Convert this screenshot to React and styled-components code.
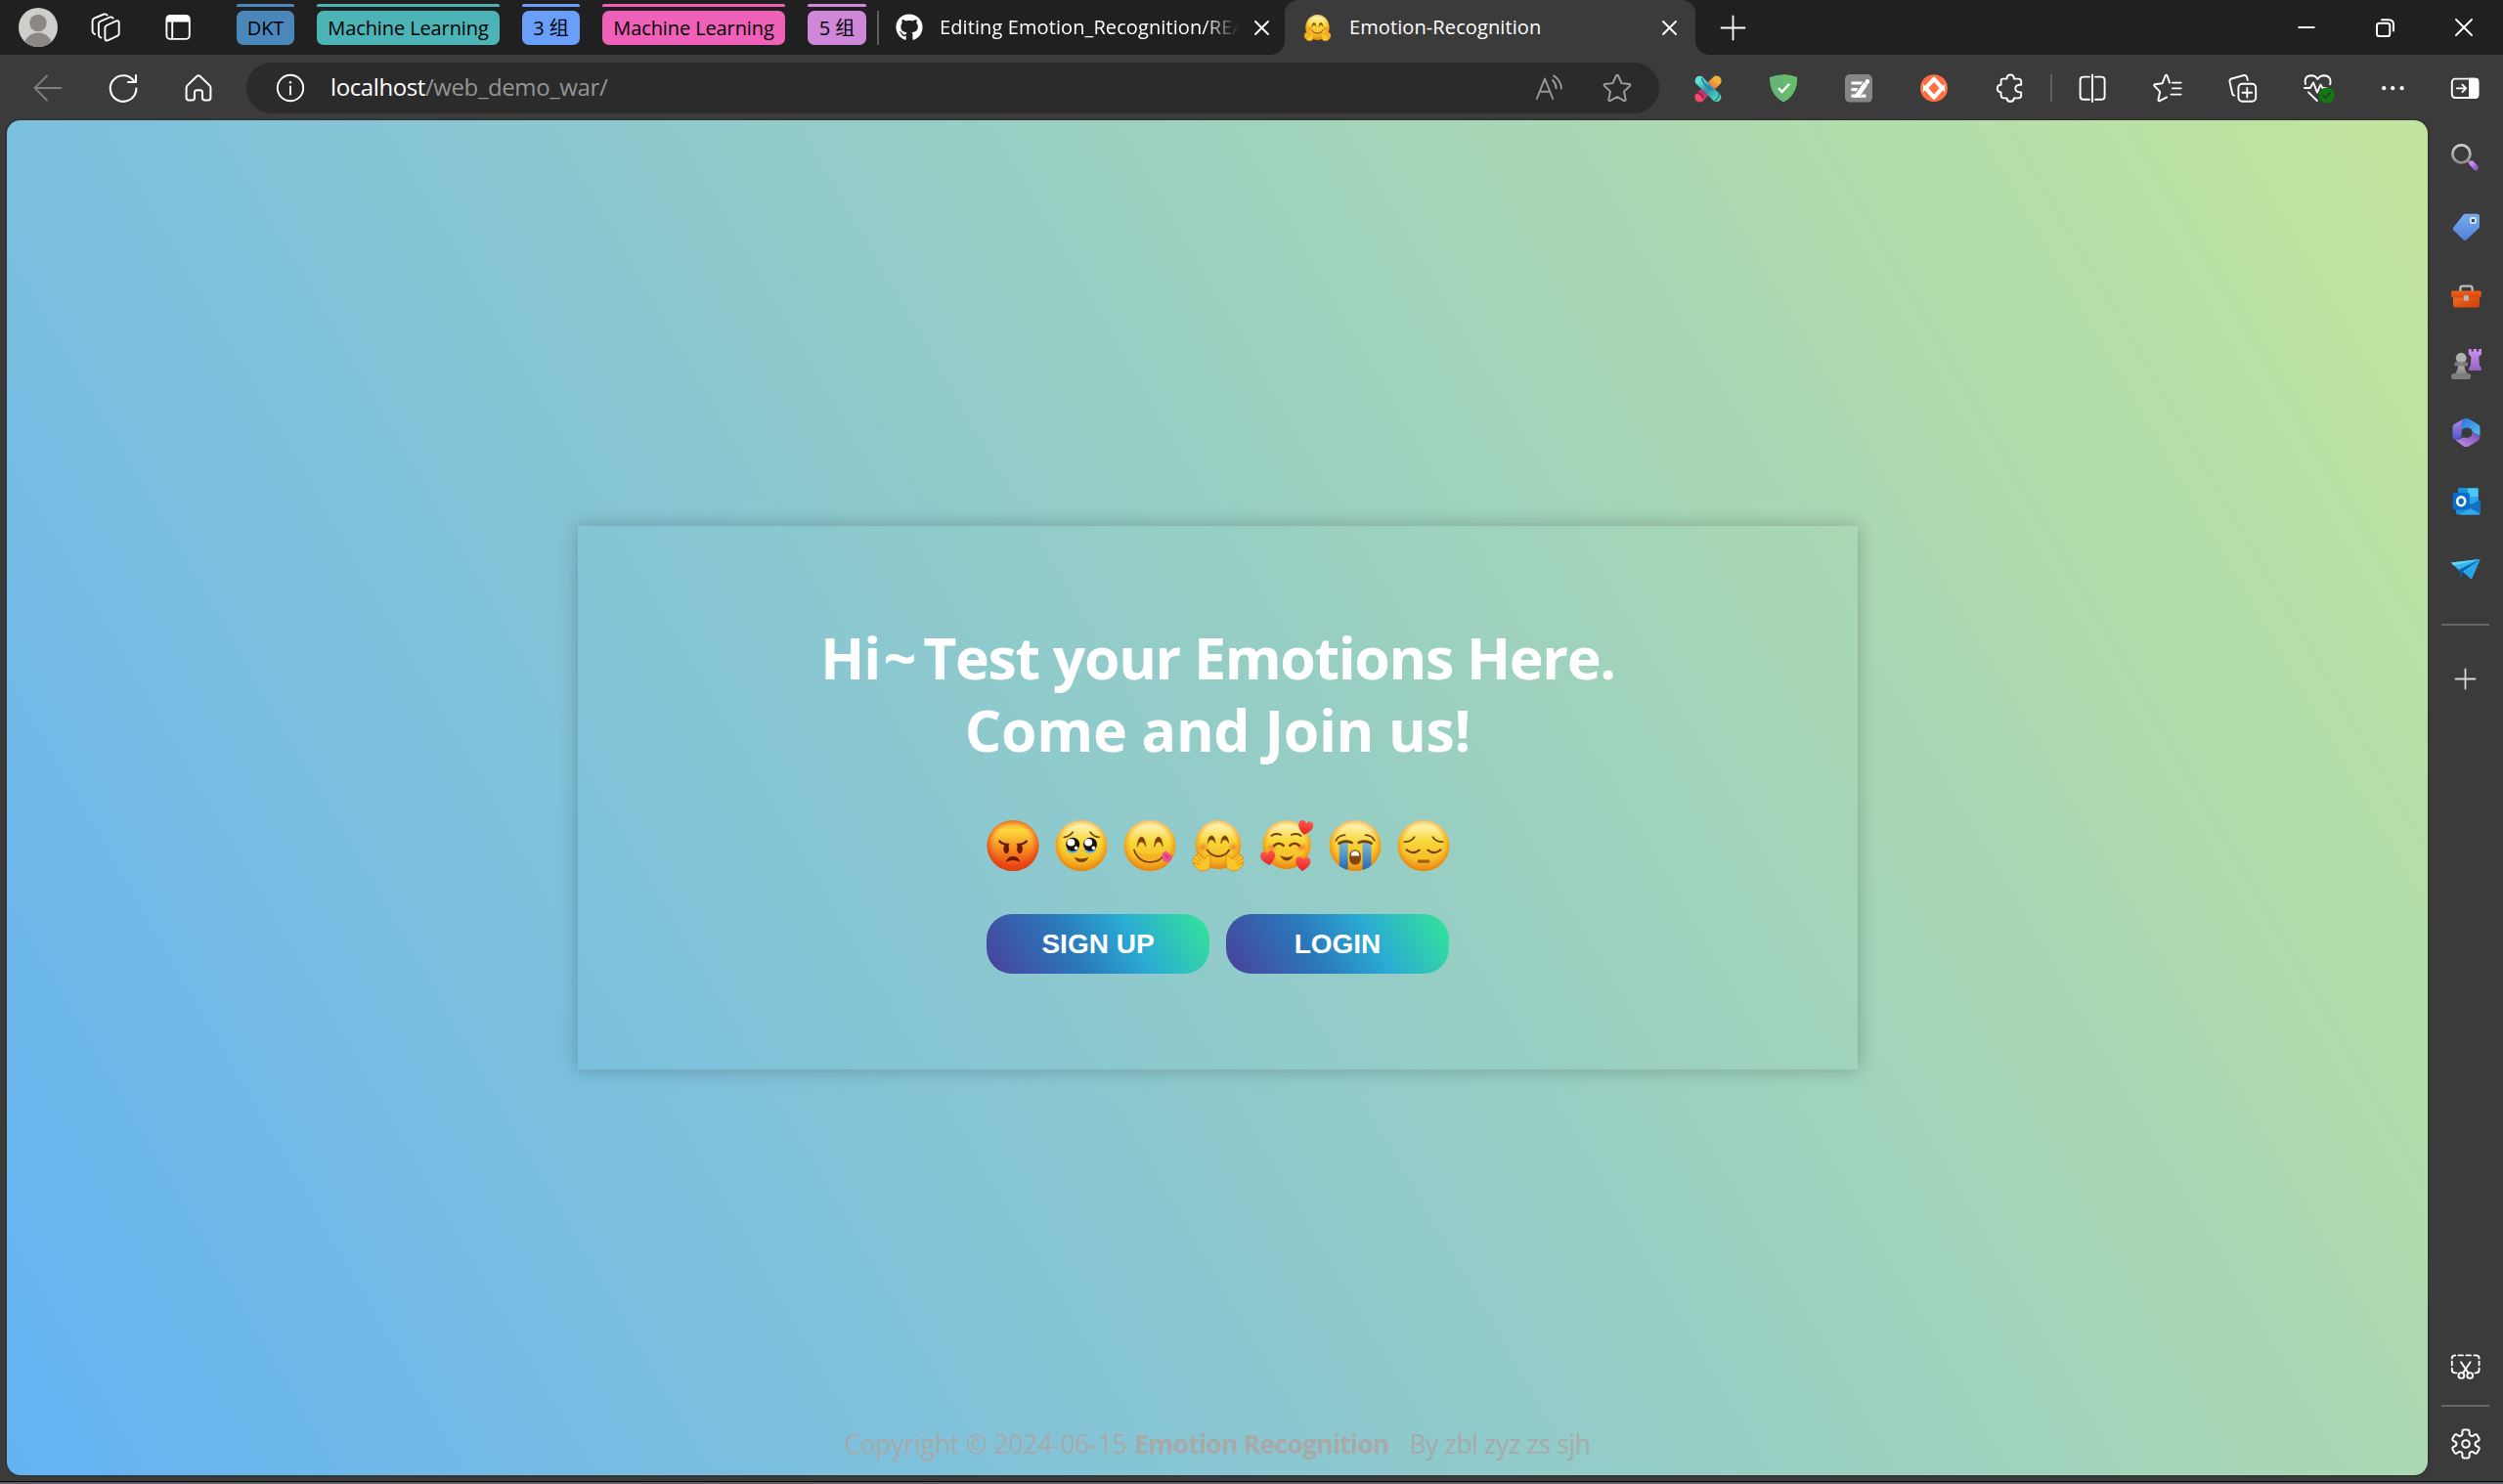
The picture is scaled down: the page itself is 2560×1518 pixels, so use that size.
import React from "react";
import styled, { createGlobalStyle, css } from "styled-components";
import { FaGithub } from "react-icons/fa";

const GlobalStyle = createGlobalStyle`
  * { box-sizing: border-box; }
  html, body { margin: 0; padding: 0; background: #3b3b3b; }
  body { font-family: "Open Sans", "Noto Sans", "Noto Sans CJK SC", sans-serif; }
  svg { display: block; flex: none; overflow: visible; }
`;

/* ---------- window frame ---------- */

const Window = styled.div`
  width: 2560px;
  height: 1518px;
  display: flex;
  flex-direction: column;
  background: #3b3b3b;
  overflow: hidden;
`;

const BottomEdge = styled.div`
  height: 3px;
  flex: none;
  background: #5c5f66;
  border-top: 1px solid #000;
`;

/* ---------- tab strip ---------- */

const TabStrip = styled.header`
  display: flex;
  height: 56px;
  flex: none;
  background: #202020;
  padding-left: 19px;
`;

const StripCell = styled.div`
  width: ${(p) => p.$w}px;
  height: 56px;
  flex: none;
  display: flex;
  align-items: center;
  justify-content: ${(p) => p.$align || "center"};
`;

const TabGroups = styled.div`
  display: flex;
  gap: 23px;
  padding-top: 4px;
`;

const GroupBlock = styled.div`
  width: ${(p) => p.$w}px;
  display: flex;
  flex-direction: column;
  gap: 4px;
  &::before {
    content: "";
    height: 3px;
    border-radius: 2px 2px 0 0;
    background: ${(p) => p.$color};
  }
`;

const GroupLabel = styled.span`
  height: 35px;
  border-radius: 7px;
  display: flex;
  align-items: center;
  justify-content: center;
  background: ${(p) => p.$color};
  color: #000;
  font-size: 20px;
  line-height: 34px;
  letter-spacing: -0.1px;
  white-space: pre;
`;

const StripDivider = styled.div`
  width: 2px;
  height: 35px;
  margin: 11px 17px 0 11px;
  background: #5d5d5d;
`;

const Tab = styled.div`
  position: relative;
  display: flex;
  align-items: center;
  height: 56px;
  width: ${(p) => p.$w}px;
  flex: none;
  color: #fff;
  ${(p) =>
    p.$active &&
    css`
      background: #3b3b3b;
      border-radius: 14px 14px 0 0;
      padding-left: 18px;
      &::before,
      &::after {
        content: "";
        position: absolute;
        bottom: 0;
        width: 14px;
        height: 14px;
      }
      &::before {
        left: -14px;
        background: radial-gradient(circle at 0 0, transparent 13.5px, #3b3b3b 14px);
      }
      &::after {
        right: -14px;
        background: radial-gradient(circle at 100% 0, transparent 13.5px, #3b3b3b 14px);
      }
    `}
`;

const TabTitle = styled.span`
  width: ${(p) => p.$w}px;
  margin-left: 17px;
  overflow: hidden;
  white-space: nowrap;
  font-size: 20px;
  line-height: 34px;
  letter-spacing: 0.1px;
  ${(p) => p.$fade && css`
    mask-image: linear-gradient(to right, #000 calc(100% - 36px), transparent);
  `}
`;

const WindowControls = styled.div`
  display: flex;
  margin-left: auto;
`;

/* ---------- toolbar ---------- */

const Toolbar = styled.div`
  display: flex;
  align-items: center;
  height: 67px;
  flex: none;
  padding-left: 10px;
  background: #3b3b3b;
`;

const ToolSlot = styled.div`
  width: ${(p) => p.$w || 77}px;
  height: 67px;
  flex: none;
  display: flex;
  align-items: center;
  justify-content: center;
`;

const AddressBar = styled.div`
  width: 1445px;
  height: 52px;
  flex: none;
  margin: 0 11px 0 11px;
  border-radius: 26px;
  background: #2b2b2b;
  display: flex;
  align-items: center;
  padding: 0 9px 0 29px;
`;

const Url = styled.div`
  flex: 1;
  margin-left: 25px;
  font-size: 24px;
  line-height: 48px;
  height: 50px;
  letter-spacing: -0.4px;
  color: #959595;
  white-space: nowrap;
`;

const UrlHost = styled.span`
  color: #fff;
`;

const ToolDivider = styled.div`
  width: 2px;
  height: 28px;
  margin: 0 2px 0 4px;
  background: #5e5e5e;
`;

/* ---------- body ---------- */

const Body = styled.div`
  display: flex;
  flex: 1;
  padding-left: 7px;
`;

const Page = styled.main`
  width: 2476px;
  height: 1386px;
  border-radius: 14px;
  background: linear-gradient(60deg, #64b3f4 0%, #c2e59c 100%);
  box-shadow: 0 0 3px rgba(0, 0, 0, 0.45);
  display: flex;
  flex-direction: column;
  align-items: center;
`;

const Card = styled.section`
  width: 1309px;
  height: 556px;
  margin-top: 415px;
  box-shadow: 0 0 18px rgba(0, 0, 0, 0.24);
  display: flex;
  flex-direction: column;
  align-items: center;
  padding: 97px 0 0 1px;
`;

const Heading = styled.h1`
  margin: 0;
  display: flex;
  flex-direction: column;
  align-items: center;
  color: #fff;
  font-size: 59px;
  font-weight: 700;
  line-height: 74px;
`;

const HeadingLine = styled.span`
  letter-spacing: ${(p) => p.$ls}px;
  white-space: nowrap;
`;

const Tilde = styled.span`
  padding: 0 8px 0 4px;
`;

const EmojiRow = styled.div`
  display: flex;
  gap: 10px;
  margin-top: 52px;
`;

const ButtonRow = styled.div`
  display: flex;
  gap: 17px;
  margin-top: 40px;
`;

const ActionButton = styled.button`
  width: 228px;
  height: 61px;
  border: 0;
  padding: 0;
  border-radius: 26px;
  background: linear-gradient(60deg, #49409a 0%, #2b78bb 38%, #2aacd3 65%, #35e695 100%);
  color: #fff;
  font: bold 28px/61px "Liberation Sans", Arial, sans-serif;
`;

const Footer = styled.footer`
  display: flex;
  margin-top: auto;
  height: 57px;
  color: #a9a9a9;
  font-size: 26.5px;
  line-height: 50px;
  white-space: nowrap;
`;

const Copyright = styled.span`
  letter-spacing: -0.2px;
  width: 297px;
`;

const ProductName = styled.b`
  letter-spacing: -0.75px;
  width: 281px;
`;

const Authors = styled.span`
  letter-spacing: -0.4px;
`;

/* ---------- sidebar ---------- */

const Sidebar = styled.aside`
  flex: 1;
  display: flex;
  flex-direction: column;
  align-items: center;
  padding-top: 4px;
  padding-bottom: 20px;
`;

const SideSlot = styled.div`
  height: ${(p) => p.$h || 70}px;
  display: flex;
  align-items: center;
  justify-content: center;
`;

const SideDivider = styled.div`
  width: 49px;
  height: 2px;
  background: #666;
  margin: ${(p) => p.$m};
`;

const Spacer = styled.div`
  flex: 1;
`;

/* ---------- icon primitives ---------- */

const Glyph = ({ size = 32, color = "#fff", sw = 1.9, children }) => (
  <svg
    width={size}
    height={size}
    viewBox={`0 0 ${size} ${size}`}
    fill="none"
    stroke={color}
    strokeWidth={sw}
    strokeLinecap="round"
    strokeLinejoin="round"
  >
    {children}
  </svg>
);

const Avatar = () => (
  <svg width="40" height="40" viewBox="0 0 40 40">
    <defs>
      <clipPath id="avatarClip"><circle cx="20" cy="20" r="20" /></clipPath>
    </defs>
    <circle cx="20" cy="20" r="20" fill="#d0cecb" />
    <g clipPath="url(#avatarClip)">
      <circle cx="20" cy="15.5" r="8.8" fill="#8b8885" />
      <ellipse cx="20" cy="38" rx="14" ry="12.5" fill="#8b8885" />
    </g>
  </svg>
);

const WorkspacesIcon = () => (
  <Glyph>
    <path d="M17 14 L27 9.4 Q29.7 8.6 29.7 11.3 V22.3 Q29.7 23.9 28.2 24.7 L18.8 29.2 Q15.6 30.4 15.4 27.4 V16.5 Q15.4 14.8 17 14Z" />
    <path d="M11.4 26.6 Q8.9 25.6 8.9 23.8 V12.4 Q8.9 10.6 10.6 9.8 L20.6 5.5 Q22.6 4.9 23.6 6.6" />
    <path d="M5 23 Q2.6 22 2.6 20.3 V9.3 Q2.6 7.4 4.3 6.6 L14.4 2.5 Q16.5 1.9 17.6 3.6" />
  </Glyph>
);

const TabActionsIcon = () => (
  <Glyph>
    <rect x="4.4" y="3.9" width="23.4" height="24" rx="3.6" />
    <path d="M4.4 10.6 V7.5 Q4.4 3.9 8 3.9 H24.2 Q27.8 3.9 27.8 7.5 V10.6Z" fill="#fff" stroke="none" />
    <path d="M10.2 10 V27.5" />
  </Glyph>
);

const CloseIcon = ({ size = 15 }) => (
  <Glyph size={size} sw={1.9}>
    <path d={`M1 1 L${size - 1} ${size - 1} M${size - 1} 1 L1 ${size - 1}`} />
  </Glyph>
);

const PlusIcon = ({ size = 24, color = "#fff" }) => (
  <Glyph size={size} color={color} sw={1.8}>
    <path d={`M${size / 2} 0.5 V${size - 0.5} M0.5 ${size / 2} H${size - 0.5}`} />
  </Glyph>
);

const MinimizeIcon = () => (
  <Glyph size={18}><path d="M0.5 9 H17.5" strokeLinecap="butt" /></Glyph>
);

const RestoreIcon = () => (
  <Glyph size={19} sw={2}>
    <rect x="1" y="4.8" width="13.3" height="13.2" rx="2.6" />
    <path d="M6 1.2 H13 Q18 1.2 18 6.2 V12.6" />
  </Glyph>
);

const BackIcon = () => (
  <Glyph size={30} color="#7f7f7f">
    <path d="M1.5 15 H28.5 M14 2.5 L1.5 15 L14 27.5" />
  </Glyph>
);

const ReloadIcon = () => (
  <Glyph sw={2.1}>
    <path d="M29.4 16.5 A13.3 13.3 0 1 1 26.8 8.6" />
    <path d="M29 3 V10 H21" />
  </Glyph>
);

const HomeIcon = () => (
  <Glyph sw={2}>
    <path d="M4.6 13.4 L14.6 3.8 Q16 2.6 17.4 3.8 L27.4 13.4 Q28.4 14.4 28.4 15.8 V26 Q28.4 28.4 26 28.4 H22.4 Q20 28.4 20 26 V20.6 Q20 18.2 17.6 18.2 H14.4 Q12 18.2 12 20.6 V26 Q12 28.4 9.6 28.4 H6 Q3.6 28.4 3.6 26 V15.8 Q3.6 14.4 4.6 13.4Z" />
  </Glyph>
);

const InfoIcon = () => (
  <Glyph>
    <circle cx="16" cy="16" r="13.2" />
    <path d="M16 14.5 V22.5" />
    <circle cx="16" cy="10.2" r="1.2" fill="#fff" stroke="none" />
  </Glyph>
);

const ReadAloudIcon = () => (
  <Glyph color="#9a9a9a">
    <path d="M2.8 27 L11 6.6 L19.2 27 M6 19.8 H16" />
    <path d="M19 8 Q22.4 11.4 22.6 16.2" />
    <path d="M20 3.4 Q27.2 8 28 16.6" />
  </Glyph>
);

const StarIcon = () => (
  <Glyph color="#a0a0a0">
    <path d="M14.9 3.5 Q16 1.8 17.1 3.5 L20.5 11.1 L28.4 12 Q30 12.5 29 13.9 L23 19.6 L24.7 27.9 Q24.6 29.6 23.1 29.1 L16 25 L8.9 29.1 Q7.4 29.6 7.3 27.9 L9 19.6 L3 13.9 Q2 12.5 3.6 12 L11.5 11.1Z" />
  </Glyph>
);

const CrossRibbonIcon = () => (
  <Glyph>
    <defs>
      <linearGradient id="ribbonTeal" x1="0" y1="0" x2="1" y2="1">
        <stop offset="0" stopColor="#63e0cf" />
        <stop offset="0.5" stopColor="#2f8fae" />
        <stop offset="1" stopColor="#4ed0b8" />
      </linearGradient>
      <linearGradient id="ribbonWarm" x1="1" y1="0" x2="0" y2="1">
        <stop offset="0" stopColor="#f2b13e" />
        <stop offset="0.42" stopColor="#ee6b3c" />
        <stop offset="0.62" stopColor="#a8256e" />
        <stop offset="1" stopColor="#fb4a63" />
      </linearGradient>
    </defs>
    <path d="M24.6 8.6 L7.4 25.4" stroke="url(#ribbonWarm)" strokeWidth="10" />
    <path d="M7.4 8.6 L24.6 25.4" stroke="url(#ribbonTeal)" strokeWidth="9.6" />
    <path d="M9.6 6.4 Q12 14 20 18" stroke="#277f9e" strokeWidth="1.6" />
    <path d="M27 20.5 Q28 25 23.4 28.5" stroke="#1f6f8e" strokeWidth="1.3" />
    <path d="M5 21 Q10 21.6 11 26.4" stroke="#8a1f63" strokeWidth="1.8" />
  </Glyph>
);

const ShieldIcon = () => (
  <Glyph>
    <path d="M16 2.2 Q22.5 2.4 30 5 Q30.6 22.6 16 30.4 Q1.4 22.6 2 5 Q9.5 2.4 16 2.2Z" fill="#66b574" stroke="none" />
    <path d="M16 2.2 Q22.5 2.4 30 5 Q30.6 22.6 16 30.4Z" fill="#67bd6c" stroke="none" />
    <path d="M10.8 16 L14.6 20 L22.2 11.8" strokeWidth="2.4" strokeLinecap="butt" strokeLinejoin="miter" />
  </Glyph>
);

const NoteIcon = () => (
  <Glyph>
    <rect x="2" y="2" width="28" height="28.6" rx="5" fill="#868686" stroke="none" />
    <path d="M8.5 11 H22 M8.5 17.6 H15 M8.5 24.2 H23.4" strokeWidth="3.2" strokeLinecap="butt" />
    <path d="M24.6 9.4 L15.4 22.4" strokeWidth="6.8" strokeLinecap="butt" stroke="#868686" />
    <path d="M23.2 11.6 L15.2 23" strokeWidth="5" strokeLinecap="butt" />
    <path d="M25 9.2 L24.5 9.9" strokeWidth="4.4" />
    <path d="M13.4 21.4 L12.4 25.6 L16.6 24.2Z" fill="#fff" strokeWidth="1" />
  </Glyph>
);

const DiamondIcon = () => (
  <Glyph>
    <circle cx="16" cy="16.2" r="14" fill="#ff6f3f" stroke="none" />
    <path d="M16 6.8 L24.4 16.1 L16 25.6 L7.6 16.1Z" fill="#ff6f3f" strokeWidth="4.2" />
    <path d="M4.8 11.4 L8.6 16.1 L4.8 20.8Z M27.2 11.4 L23.4 16.1 L27.2 20.8Z" fill="#fff" stroke="none" />
  </Glyph>
);

const PuzzleIcon = () => (
  <Glyph>
    <path d="M9.3 6.6 H13.6 V5.6 Q14 2.5 17.2 2.5 Q20.4 2.5 20.8 5.6 V6.6 H25.2 Q28.2 6.6 28.2 9.6 V12.8 H26.4 Q22.3 13.2 22.3 16.6 Q22.3 20 26.4 20.4 H28.2 V23.6 Q28.2 26.4 25.2 26.4 H20.8 V27 Q20.4 29.8 17.2 29.8 Q14 29.8 13.6 27 V26.4 H10.6 Q7.6 26.4 7.6 23.6 V20.4 H7 Q3.8 20 3.8 16.6 Q3.8 13.2 7 12.8 H7.6 V9 Q7.6 6.6 9.3 6.6Z" />
  </Glyph>
);

const SplitIcon = () => (
  <Glyph>
    <path d="M13 27.8 H7 Q3.6 27.8 3.6 24.4 V8 Q3.6 4.6 7 4.6 H13 M19 4.6 H25 Q28.6 4.6 28.6 8 V24.4 Q28.6 27.8 25 27.8 H19 M16 2.4 V30" />
  </Glyph>
);

const FavoritesIcon = () => (
  <Glyph>
    <path d="M20.8 10.6 H29.6 M21 16.4 H29.6 M19.4 22.6 H29.6" />
    <path d="M18 10.6 L15.6 3.6 Q14.6 1.8 13.6 3.6 L10.6 11.2 L3 12.2 Q1.6 12.8 2.6 14 L8.2 19.8 L6.4 28.2 Q6.6 29.8 8 29.2 L15.2 25.4" />
  </Glyph>
);

const CollectionsIcon = () => (
  <Glyph>
    <rect x="11.4" y="11.8" width="17.8" height="18" rx="4" />
    <path d="M20.3 16 V25.6 M15.5 20.8 H25.1" />
    <path d="M7.2 23.6 Q5.6 23.6 5.1 21.2 L2.5 9.6 Q2 7.2 4.3 6.5 L17 3 Q19.2 2.6 20 4.8 L20.8 8" />
  </Glyph>
);

const HeartIcon = () => (
  <Glyph size={34}>
    <path d="M4 13 Q2.2 4.6 10 4.3 Q14 4.3 16.4 8 Q19 4.3 23 4.3 Q31 4.8 29.2 13.4" />
    <path d="M3 17 H8.8 L12 11.4 L16 21.6 L19.4 13.6 L21.4 17 H25" />
    <path d="M7 21.4 L15.8 30" />
    <circle cx="25.6" cy="24.6" r="8" fill="#107c10" stroke="none" />
    <path d="M22 24.8 L24.6 27.4 L29.4 21.6" stroke="#2b3f2b" strokeWidth="1.8" />
  </Glyph>
);

const MoreIcon = () => (
  <Glyph>
    <g fill="#fff" stroke="none">
      <circle cx="6.2" cy="16.2" r="2.1" />
      <circle cx="15.2" cy="16.2" r="2.1" />
      <circle cx="24.6" cy="16.2" r="2.1" />
    </g>
  </Glyph>
);

const PanelIcon = () => (
  <Glyph>
    <rect x="2.8" y="6.6" width="26.6" height="19.4" rx="3.4" />
    <path d="M20 5.8 H27 Q30.3 5.8 30.3 9 V23.6 Q30.3 26.8 27 26.8 H20Z" fill="#fff" stroke="none" />
    <path d="M7.8 16.4 H17 M13.4 12.6 L17.2 16.4 L13.4 20.2" />
  </Glyph>
);

/* ---------- sidebar icons ---------- */

const SearchIcon = () => (
  <Glyph size={36}>
    <defs>
      <linearGradient id="lensRing" x1="0" y1="0" x2="0" y2="1">
        <stop offset="0" stopColor="#cfcfcf" />
        <stop offset="1" stopColor="#8f8f8f" />
      </linearGradient>
      <linearGradient id="lensGrip" x1="0" y1="0" x2="1" y2="1">
        <stop offset="0" stopColor="#c98cf5" />
        <stop offset="1" stopColor="#8d63c9" />
      </linearGradient>
    </defs>
    <path d="M20 20 L23 23" stroke="#8f8f8f" strokeWidth="2.6" />
    <circle cx="13.4" cy="13.4" r="9" stroke="url(#lensRing)" strokeWidth="2.8" />
    <path d="M24 23 L28 27.4" stroke="url(#lensGrip)" strokeWidth="5.4" />
  </Glyph>
);

const TagIcon = () => (
  <Glyph size={36}>
    <defs>
      <linearGradient id="tagFill" x1="0" y1="0" x2="0" y2="1">
        <stop offset="0" stopColor="#79aaf0" />
        <stop offset="1" stopColor="#5181d8" />
      </linearGradient>
    </defs>
    <path d="M17.6 4.8 H29.4 Q32 4.8 32 7.4 V17.4 Q32 18.6 31 19.8 L18.6 31.2 Q17 32.6 15.4 31.2 L5.4 21.6 Q4 20 5.4 18.4 L15.6 5.6 Q16.4 4.8 17.6 4.8Z" fill="url(#tagFill)" stroke="none" />
    <circle cx="25.4" cy="11.6" r="2.7" fill="#3b4454" stroke="#e8f0ff" strokeWidth="1.6" />
  </Glyph>
);

const BriefcaseIcon = () => (
  <Glyph size={36}>
    <defs>
      <linearGradient id="caseFill" x1="0" y1="0" x2="1" y2="1">
        <stop offset="0" stopColor="#f8732a" />
        <stop offset="1" stopColor="#d03c06" />
      </linearGradient>
      <linearGradient id="lidFill" x1="0" y1="0" x2="0" y2="1">
        <stop offset="0" stopColor="#f0601a" />
        <stop offset="1" stopColor="#d9480a" />
      </linearGradient>
    </defs>
    <path d="M12.4 14 V11 Q12.4 8.6 15 8.6 H22 Q24.6 8.6 24.6 11 V14" stroke="#b9bcbc" strokeWidth="2.4" />
    <rect x="5" y="15" width="27" height="15.4" rx="2.4" fill="url(#caseFill)" stroke="none" />
    <rect x="3" y="13.4" width="30.8" height="7" rx="1.6" fill="url(#lidFill)" stroke="none" />
    <rect x="15.8" y="18" width="5.2" height="5.8" rx="1.2" fill="#b4b4b4" stroke="none" />
  </Glyph>
);

const ChessIcon = () => (
  <Glyph size={36}>
    <defs>
      <linearGradient id="rookFill" x1="0" y1="0" x2="0" y2="1">
        <stop offset="0" stopColor="#cf94f2" />
        <stop offset="1" stopColor="#9462c4" />
      </linearGradient>
      <linearGradient id="pawnFill" x1="0" y1="0" x2="0" y2="1">
        <stop offset="0" stopColor="#b8b8b8" />
        <stop offset="1" stopColor="#868686" />
      </linearGradient>
    </defs>
    <path d="M20.8 3 H23.6 V5.4 H25.8 V3 H29 V5.4 H31.2 V3 H34 V8.4 L31.2 11 L32 20 Q33.8 21 33.8 25 H21 Q21 21 22.8 20 L23.4 11 L20.8 8.4Z" fill="url(#rookFill)" stroke="none" />
    <path d="M10.4 18 H16.2 Q16.4 24 19.6 28.5 H7 Q10.2 24 10.4 18Z" fill="url(#pawnFill)" stroke="none" />
    <circle cx="13.2" cy="12.2" r="5.4" fill="#b0b0b0" stroke="none" />
    <rect x="6.2" y="16.2" width="14" height="4.4" rx="2.2" fill="#7f7f7f" stroke="none" />
    <rect x="3" y="28" width="20" height="6" rx="2.8" fill="#7d7d7d" stroke="none" />
  </Glyph>
);

const Office365Icon = () => (
  <Glyph size={36}>
    <defs>
      <linearGradient id="officeLeft" x1="0" y1="0" x2="0" y2="1">
        <stop offset="0" stopColor="#b88bea" />
        <stop offset="1" stopColor="#4a55c8" />
      </linearGradient>
      <linearGradient id="officeRight" x1="0" y1="0" x2="1" y2="1">
        <stop offset="0" stopColor="#2f6fdc" />
        <stop offset="1" stopColor="#54c6f2" />
      </linearGradient>
      <linearGradient id="officeBottom" x1="0" y1="1" x2="1" y2="0">
        <stop offset="0" stopColor="#cc92ea" />
        <stop offset="1" stopColor="#6a4fae" />
      </linearGradient>
    </defs>
    <path d="M17 4 Q19 3.4 21 4.6 L30.4 10 Q32.4 11.2 32.4 13.4 V21.6 L24.6 18 Q24.4 13.6 19.4 13.4 Q15 13.2 13.6 17 L13.4 10 Q13.6 5.6 17 4Z" fill="url(#officeRight)" stroke="none" />
    <path d="M17 4 Q13.6 5.8 13.6 10 V22 Q12.6 26.4 7.6 26 Q4.4 25 4.4 22 V13 Q4.4 11 6.2 9.8Z" fill="url(#officeLeft)" stroke="none" />
    <path d="M7.6 26.2 Q12 26.4 14.4 23.6 Q18 24 21 23.6 Q24.6 22 24.6 18 L32.4 21.6 Q32.4 25.4 30.4 26.8 L21 32.4 Q18.4 33.8 15.6 32.4Z" fill="url(#officeBottom)" stroke="none" />
  </Glyph>
);

const OutlookIcon = () => (
  <Glyph size={36}>
    <g stroke="none">
      <rect x="10" y="5" width="20.6" height="17" rx="1.4" fill="#1a8fdc" />
      <rect x="20" y="5.6" width="10.6" height="9" fill="#4cc7f5" />
      <rect x="20" y="14.6" width="10.6" height="7" fill="#2aa3e8" />
      <path d="M8 19 L20 24 L32.6 17.6 V30.6 Q32.6 32.4 30.8 32.4 H9.8 Q8 32.4 8 30.6Z" fill="#1b90e0" />
      <path d="M20 24 L32.6 17.6 V31 Z" fill="#0f6fc0" />
      <path d="M21 26 L32.6 31.4 Q32 32.4 30.8 32.4 H12Z" fill="#30aaea" />
      <rect x="4.6" y="10" width="17.2" height="17.6" rx="1.8" fill="#0a6bc8" />
    </g>
    <ellipse cx="13.2" cy="18.8" rx="4" ry="4.4" strokeWidth="2.6" />
  </Glyph>
);

const SendIcon = () => (
  <Glyph size={36}>
    <g stroke="none">
      <path d="M3 11.4 L32.8 8 L11.6 20Z" fill="#35b8ee" />
      <path d="M11.4 18.6 L32.8 8 L16 21 L12.2 27.6Z" fill="#0c5ca8" />
      <path d="M14.6 20.4 L32.8 8 L24.4 27.6 Q23.6 28.6 22.4 27.6Z" fill="#2aa5e8" />
      <path d="M3 11.4 L32.8 8 L5.4 14.4Z" fill="#63d4f8" />
    </g>
  </Glyph>
);

const ScreenshotIcon = () => (
  <Glyph size={36}>
    <path d="M8.4 24.4 H7 Q3.8 24.4 3.8 21 V19.8 M3.8 16.4 V12.6 M3.8 9.6 Q3.8 6.4 7.2 6.4 M10.4 6.4 H15 M18.4 6.4 H23 M26.4 6.4 H28.4 Q31.6 6.4 31.6 9.6 M31.6 12.6 V16.4 M31.6 19.6 V21 Q31.6 24.4 28.4 24.4 H27.4" />
    <path d="M13 13.2 L20.6 24.6 M22.6 13.2 L15 24.6" />
    <circle cx="13.4" cy="27" r="2.9" />
    <circle cx="22.2" cy="27" r="2.9" />
  </Glyph>
);

const gearPath = (() => {
  const parts = [];
  const at = (deg, r) => {
    const a = (deg * Math.PI) / 180;
    return `${(18 + r * Math.cos(a)).toFixed(2)} ${(18 + r * Math.sin(a)).toFixed(2)}`;
  };
  for (let i = 0; i < 6; i += 1) {
    const c = -90 + i * 60;
    parts.push(`${i ? "L" : "M"}${at(c - 20, 10.4)}`);
    parts.push(`L${at(c - 16, 13.2)} Q${at(c - 14, 14.8)} ${at(c - 8, 14.6)}`);
    parts.push(`L${at(c + 8, 14.6)} Q${at(c + 14, 14.8)} ${at(c + 16, 13.2)}`);
    parts.push(`L${at(c + 20, 10.4)} Q${at(c + 30, 8.8)} ${at(c + 40, 10.4)}`);
  }
  return `${parts.join(" ")}Z`;
})();

const GearIcon = () => (
  <Glyph size={36} sw={2}>
    <path d={gearPath} />
    <circle cx="18" cy="18" r="3.8" />
  </Glyph>
);

/* ---------- emoji ---------- */

const INK = "#7a3f0c";

const EmojiDefs = () => (
  <svg width="0" height="0">
    <defs>
      <linearGradient id="faceYellow" x1="0" y1="0" x2="0" y2="1">
        <stop offset="0" stopColor="#fbe9a8" />
        <stop offset="0.14" stopColor="#fdefa2" />
        <stop offset="0.42" stopColor="#f7d838" />
        <stop offset="0.75" stopColor="#f6bf27" />
        <stop offset="1" stopColor="#f0991c" />
      </linearGradient>
      <radialGradient id="faceRim" cx="0.5" cy="0.46" r="0.54">
        <stop offset="0.68" stopColor="#f09a1a" stopOpacity="0" />
        <stop offset="1" stopColor="#e8800f" stopOpacity="0.95" />
      </radialGradient>
      <linearGradient id="faceRed" x1="0" y1="0" x2="0" y2="1">
        <stop offset="0" stopColor="#f7a132" />
        <stop offset="0.2" stopColor="#fbd83e" />
        <stop offset="0.5" stopColor="#f79a24" />
        <stop offset="0.85" stopColor="#ee5416" />
        <stop offset="1" stopColor="#e43c12" />
      </linearGradient>
      <radialGradient id="redRim" cx="0.5" cy="0.46" r="0.54">
        <stop offset="0.66" stopColor="#e8471a" stopOpacity="0" />
        <stop offset="1" stopColor="#e03d14" stopOpacity="0.95" />
      </radialGradient>
      <radialGradient id="blush">
        <stop offset="0" stopColor="#f4622c" stopOpacity="0.75" />
        <stop offset="1" stopColor="#f4822c" stopOpacity="0" />
      </radialGradient>
      <linearGradient id="tearBlue" x1="0" y1="0" x2="0" y2="1">
        <stop offset="0" stopColor="#7fb6cf" />
        <stop offset="0.45" stopColor="#4f94c6" />
        <stop offset="1" stopColor="#1c5fae" />
      </linearGradient>
      <linearGradient id="heartRed" x1="0" y1="0" x2="0" y2="1">
        <stop offset="0" stopColor="#ff5a4a" />
        <stop offset="1" stopColor="#e3202a" />
      </linearGradient>
    </defs>
  </svg>
);

const Face = ({ cx = 30, cy = 30, rx = 26.5, ry = 26, red }) => (
  <>
    <ellipse cx={cx} cy={cy} rx={rx} ry={ry} fill={red ? "url(#faceRed)" : "url(#faceYellow)"} />
    <ellipse cx={cx} cy={cy} rx={rx} ry={ry} fill={red ? "url(#redRim)" : "url(#faceRim)"} />
  </>
);

const Emoji = ({ size = 60, children }) => (
  <svg width={size} height={size} viewBox="0 0 60 60" fill="none" strokeLinecap="round" strokeLinejoin="round">
    {children}
  </svg>
);

const Angry = () => (
  <Emoji>
    <Face red />
    <g stroke="#6b1a0c" strokeWidth="2.2">
      <path d="M16.4 25.4 Q19.6 29 25.4 28.8 M43.8 25.4 Q40.6 29 34.8 28.8" />
    </g>
    <ellipse cx="23.2" cy="33.2" rx="2.8" ry="4.8" fill="#6b1a0c" />
    <ellipse cx="37" cy="33.2" rx="2.8" ry="4.8" fill="#6b1a0c" />
    <path d="M22.8 46.8 Q24.4 41 30.1 41 Q35.8 41 37.4 46.8 Q33.8 45 30.1 45 Q26.4 45 22.8 46.8Z" fill="#6b1a0c" />
  </Emoji>
);

const Pleading = () => (
  <Emoji>
    <Face />
    <ellipse cx="21" cy="33.2" rx="6" ry="4.6" fill="#58b6e6" />
    <ellipse cx="39" cy="33.2" rx="6" ry="4.6" fill="#58b6e6" />
    <circle cx="21.2" cy="28.8" r="7" fill="#17120e" />
    <circle cx="39" cy="28.8" r="7" fill="#17120e" />
    <g fill="#fff">
      <ellipse cx="19.4" cy="26.8" rx="4" ry="3.8" />
      <ellipse cx="37.2" cy="26.8" rx="4" ry="3.8" />
      <circle cx="24.6" cy="32.4" r="1.8" />
      <circle cx="42.4" cy="32.4" r="1.8" />
    </g>
    <g stroke={INK} strokeWidth="1.7">
      <path d="M12.2 21.4 Q18 20.6 21.2 16.2 M48 21.4 Q42.2 20.6 39 16.2" />
    </g>
    <path d="M22.8 41.8 Q30 45.2 37.4 41.8 Q35.4 47 30.1 47 Q24.8 47 22.8 41.8Z" fill={INK} />
  </Emoji>
);

const SmileEye = ({ x, y, w = 8.6, h = 9.6 }) => (
  <path
    d={`M${x} ${y + h} Q${x + w * 0.1} ${y} ${x + w / 2} ${y} Q${x + w * 0.9} ${y} ${x + w} ${y + h} Q${x + w * 0.84} ${y + h * 0.5} ${x + w / 2} ${y + h * 0.5} Q${x + w * 0.16} ${y + h * 0.5} ${x} ${y + h}Z`}
    fill={INK}
    stroke={INK}
    strokeWidth="0.7"
  />
);

const Yum = () => (
  <Emoji>
    <Face />
    <path d="M14 34.6 Q18.6 46.8 31 46.8 Q43 46.4 47.4 34.6 Q42 39 30.6 39 Q19 39 14 34.6Z" fill="#f6a823" fillOpacity="0.6" />
    <SmileEye x={17.2} y={21.2} />
    <SmileEye x={34.6} y={21.2} />
    <path d="M14 34.4 Q18 46.8 31 46.8 Q40.6 46.4 44.4 39.8" stroke={INK} strokeWidth="1.7" />
    <path d="M43.6 37 Q41.6 42.4 44 45.4 Q47.8 49 51.6 44.8 Q54 41 50.8 38.8 Q47.6 37.4 46.6 35.4Z" fill="#ee4f96" />
    <path d="M45.8 39.4 L48.8 42.4" stroke="#c42c70" strokeWidth="1.2" />
  </Emoji>
);

const Hugging = ({ size }) => (
  <Emoji size={size}>
    <Face cx={29.9} cy={29} rx={23.2} ry={25} />
    <ellipse cx="14.6" cy="31.6" rx="6" ry="5.6" fill="url(#blush)" />
    <ellipse cx="45.4" cy="31.6" rx="6" ry="5.6" fill="url(#blush)" />
    <SmileEye x={19.2} y={20} w={7.8} h={7.4} />
    <SmileEye x={32.8} y={20} w={7.8} h={7.4} />
    <path d="M18.8 34.6 Q23 41 30 41 Q37 41 41.2 34.6" stroke={INK} strokeWidth="1.9" />
    <g stroke="#e28a12" strokeWidth="0.9" fill="#fbc52c">
      <path d="M21.4 40 Q19.4 38.8 17.8 41.8 Q17 44 15 43.4 L9.4 38.4 Q7.4 38 8 40.2 L5.4 40.2 Q3.6 41 5.4 43 L3.8 44.4 Q3 46 5 47.2 L4.4 49 Q4.6 50.8 6.8 51.2 Q8 55.4 14 55.8 Q22.4 55.8 22 47 Q21.8 43.4 22.2 41.6 Q22.4 40.6 21.4 40Z" />
      <path d="M38.6 40 Q40.6 38.8 42.2 41.8 Q43 44 45 43.4 L50.6 38.4 Q52.6 38 52 40.2 L54.6 40.2 Q56.4 41 54.6 43 L56.2 44.4 Q57 46 55 47.2 L55.6 49 Q55.4 50.8 53.2 51.2 Q52 55.4 46 55.8 Q37.6 55.8 38 47 Q38.2 43.4 37.8 41.6 Q37.6 40.6 38.6 40Z" />
    </g>
    <g stroke="#d9800e" strokeWidth="0.9">
      <path d="M8 40.4 L13 45.4 M5.4 43.2 L11.4 47.4 M5 47.4 L10.4 49.6 M52 40.4 L47 45.4 M54.6 43.2 L48.6 47.4 M55 47.4 L49.6 49.6" />
    </g>
  </Emoji>
);

const Heart = ({ x, y, r = 0 }) => (
  <path
    transform={`translate(${x} ${y}) rotate(${r})`}
    d="M0 7.6 Q-7.6 2.4 -7.6 -2.2 Q-7.4 -6.6 -3.8 -6.8 Q-1 -6.8 0 -4 Q1 -6.8 3.8 -6.8 Q7.4 -6.6 7.6 -2.2 Q7.6 2.4 0 7.6Z"
    fill="url(#heartRed)"
  />
);

const Adored = () => (
  <Emoji>
    <Face cx={30} cy={29} rx={24.6} ry={25} />
    <ellipse cx="14.6" cy="32" rx="7" ry="5" fill="url(#blush)" />
    <ellipse cx="45.6" cy="32" rx="7" ry="5" fill="url(#blush)" />
    <g stroke={INK} strokeWidth="1.8">
      <path d="M14.4 20 Q18 16.6 24.4 19 M34.6 19 Q41 16.6 44.6 20" />
      <path d="M17 30.2 Q21.6 25.4 26.8 30 M33.2 30 Q38.4 25.4 43 30.2" strokeWidth="2.4" />
    </g>
    <path d="M23.4 40 Q30.2 43.8 36.8 40 Q34.8 45.4 30.1 45.4 Q25.4 45.4 23.4 40Z" fill={INK} />
    <Heart x={49.2} y={11.4} r={12} />
    <Heart x={11} y={42.4} r={-10} />
    <Heart x={46.6} y={48.4} r={6} />
  </Emoji>
);

const Crying = () => (
  <Emoji>
    <defs>
      <clipPath id="cryFace"><ellipse cx="30" cy="30" rx="26.5" ry="26" /></clipPath>
    </defs>
    <Face />
    <g clipPath="url(#cryFace)">
      <rect x="13.8" y="27" width="8.8" height="30" fill="url(#tearBlue)" />
      <rect x="37.6" y="27" width="8.8" height="30" fill="url(#tearBlue)" />
    </g>
    <g stroke={INK}>
      <path d="M13.4 27.6 Q19.6 24 26.6 27 M33.6 27 Q40.6 24 46.8 27.6" strokeWidth="2.6" />
      <path d="M10.4 24.8 Q13 19.4 19.6 19.2 M49.8 24.8 Q47.2 19.4 40.6 19.2" strokeWidth="1.7" />
    </g>
    <rect x="24.2" y="34.2" width="11.6" height="15.4" rx="5.8" fill="#84430f" />
    <path d="M25.6 40.4 Q25.8 35.4 30 35.4 Q34.2 35.4 34.4 40.4Z" fill="#f6f6f2" />
  </Emoji>
);

const Pensive = () => (
  <Emoji>
    <Face />
    <g stroke={INK}>
      <path d="M12.6 34.2 Q18.6 39.8 25.6 34.6 M34.4 34.6 Q41.4 39.8 47.4 34.2" strokeWidth="2.2" />
      <path d="M10.4 26.2 Q17 26.4 20.6 21.2 M49.6 26.2 Q43 26.4 39.4 21.2" strokeWidth="1.8" />
    </g>
    <rect x="23.8" y="44.4" width="12.6" height="3.4" rx="1.4" fill="#a35f14" />
  </Emoji>
);

/* ---------- content ---------- */

const groups = [
  { label: "DKT", color: "#4a87ba", w: 59 },
  { label: "Machine Learning", color: "#4cb3b6", w: 187 },
  { label: "3 组", color: "#699ffb", w: 59 },
  { label: "Machine Learning", color: "#ef60b9", w: 187 },
  { label: "5 组", color: "#cf87da", w: 60 },
];

const extensions = [CrossRibbonIcon, ShieldIcon, NoteIcon, DiamondIcon, PuzzleIcon];
const browserTools = [SplitIcon, FavoritesIcon, CollectionsIcon, HeartIcon, MoreIcon];
const sidebarApps = [SearchIcon, TagIcon, BriefcaseIcon, ChessIcon, Office365Icon, OutlookIcon, SendIcon];
const emotions = [Angry, Pleading, Yum, Hugging, Adored, Crying, Pensive];

export default function App() {
  return (
    <Window>
      <GlobalStyle />
      <TabStrip>
        <StripCell $w={53} $align="flex-start"><Avatar /></StripCell>
        <StripCell $w={72}><WorkspacesIcon /></StripCell>
        <StripCell $w={76}><TabActionsIcon /></StripCell>
        <StripCell $w={22} />
        <TabGroups>
          {groups.map((g, i) => (
            <GroupBlock key={i} $w={g.w} $color={g.color}>
              <GroupLabel $color={g.color}>{g.label}</GroupLabel>
            </GroupBlock>
          ))}
        </TabGroups>
        <StripDivider />
        <Tab $w={398}>
          <FaGithub size={28} />
          <TabTitle $w={306} $fade>Editing Emotion_Recognition/REA</TabTitle>
          <StripCell $w={46}><CloseIcon /></StripCell>
        </Tab>
        <Tab $w={420} $active>
          <Hugging size={31} />
          <TabTitle $w={303}>Emotion-Recognition</TabTitle>
          <StripCell $w={48}><CloseIcon /></StripCell>
        </Tab>
        <StripCell $w={76}><PlusIcon size={25} /></StripCell>
        <WindowControls>
          <StripCell $w={80}><MinimizeIcon /></StripCell>
          <StripCell $w={80}><RestoreIcon /></StripCell>
          <StripCell $w={81}><CloseIcon size={18} /></StripCell>
        </WindowControls>
      </TabStrip>

      <Toolbar>
        <ToolSlot><BackIcon /></ToolSlot>
        <ToolSlot><ReloadIcon /></ToolSlot>
        <ToolSlot><HomeIcon /></ToolSlot>
        <AddressBar>
          <InfoIcon />
          <Url><UrlHost>localhost</UrlHost>/web_demo_war/</Url>
          <ToolSlot $w={69}><ReadAloudIcon /></ToolSlot>
          <ToolSlot $w={69}><StarIcon /></ToolSlot>
        </AddressBar>
        {extensions.map((Icon, i) => (
          <ToolSlot key={i}><Icon /></ToolSlot>
        ))}
        <ToolDivider />
        {browserTools.map((Icon, i) => (
          <ToolSlot key={i} $w={77.2}><Icon /></ToolSlot>
        ))}
        <ToolSlot $w={69}><PanelIcon /></ToolSlot>
      </Toolbar>

      <Body>
        <Page>
          <Card>
            <Heading>
              <HeadingLine $ls={-1.35}>Hi<Tilde>~</Tilde>Test your Emotions Here.</HeadingLine>
              <HeadingLine $ls={-0.3}>Come and Join us!</HeadingLine>
            </Heading>
            <EmojiDefs />
            <EmojiRow>
              {emotions.map((Emotion, i) => (
                <Emotion key={i} />
              ))}
            </EmojiRow>
            <ButtonRow>
              <ActionButton>SIGN UP</ActionButton>
              <ActionButton>LOGIN</ActionButton>
            </ButtonRow>
          </Card>
          <Footer>
            <Copyright>Copyright © 2024-06-15</Copyright>
            <ProductName>Emotion Recognition</ProductName>
            <Authors>By zbl zyz zs sjh</Authors>
          </Footer>
        </Page>
        <Sidebar>
          {sidebarApps.map((Icon, i) => (
            <SideSlot key={i}><Icon /></SideSlot>
          ))}
          <SideDivider $m="21px 0 36px" />
          <SideSlot $h={36}><PlusIcon size={21} color="#d8d8d8" /></SideSlot>
          <Spacer />
          <SideSlot $h={36}><ScreenshotIcon /></SideSlot>
          <SideDivider $m="21px 0 20px" />
          <SideSlot $h={36}><GearIcon /></SideSlot>
        </Sidebar>
      </Body>
      <BottomEdge />
    </Window>
  );
}
